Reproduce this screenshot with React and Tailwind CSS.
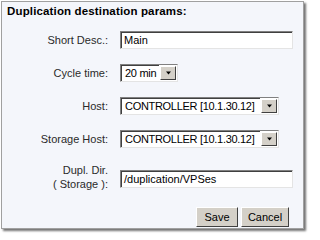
import React from "react";

const font = { fontFamily: '"Liberation Sans", Arial, sans-serif' };

function Arrow() {
  return (
    <div className="w-[16px] self-stretch m-[1px] bg-[#d4d0c8] border-t border-l border-t-white border-l-white border-r border-b border-r-[#404040] border-b-[#404040] flex items-center justify-center">
      <svg width="7" height="4" viewBox="0 0 7 4">
        <path d="M1 0.5h5L3.5 3.5z" fill="#000" />
      </svg>
    </div>
  );
}

function Select({ value, width }) {
  return (
    <div
      className={`flex h-[18px] bg-white border border-t-[#808080] border-l-[#808080] border-r-[#e4e4e4] border-b-[#e4e4e4] ${width}`}
    >
      <div className="flex-1 flex items-center pl-[3px] text-[11px] tracking-[-0.3px] text-black leading-none whitespace-nowrap overflow-hidden border-t border-l border-t-[#404040] border-l-[#404040]">
        {value}
      </div>
      <Arrow />
    </div>
  );
}

function Input({ value, cls = "" }) {
  return (
    <div className={`h-[18px] w-[173px] bg-white border border-t-[#808080] border-l-[#808080] border-r-[#e4e4e4] border-b-[#e4e4e4] ${cls}`}>
      <div className="h-full flex items-center pl-[2px] text-[11px] text-black leading-none border-t border-l border-t-[#404040] border-l-[#404040]">
        {value}
      </div>
    </div>
  );
}

function Label({ children }) {
  return (
    <div className="w-[106px] text-right text-[11px] leading-[14px] text-[#2a2a2a]">{children}</div>
  );
}

function Button({ children, w }) {
  return (
    <div
      className={`h-[20px] ${w} bg-[#d4d0c8] border border-t-white border-l-white border-r-[#404040] border-b-[#404040] flex items-center justify-center text-[11px] text-black`}
    >
      {children}
    </div>
  );
}

export default function App() {
  return (
    <div className="w-[309px] h-[234px] bg-white pl-[1px] pt-[1px]" style={font}>
      <div className="w-[303px] h-[228px] border border-[#a0a0a0] bg-[#f4f6fb] shadow-[2px_2px_2px_rgba(0,0,0,0.55)] flex flex-col">
        <div className="pl-[5px] pt-[3px] h-[19px] text-[11.5px] font-bold text-black leading-[13px] tracking-[0.15px]">
          Duplication destination params:
        </div>
        <div className="flex flex-col pt-[10px] gap-[15px]">
          <div className="flex items-center gap-[12px]">
            <Label>Short Desc.:</Label>
            <Input value="Main" />
          </div>
          <div className="flex items-center gap-[12px]">
            <Label>Cycle time:</Label>
            <Select value="20 min" width="w-[58px]" />
          </div>
          <div className="flex items-center gap-[12px]">
            <Label>Host:</Label>
            <Select value="CONTROLLER [10.1.30.12]" width="w-[159px]" />
          </div>
          <div className="flex items-center gap-[12px]">
            <Label>Storage Host:</Label>
            <Select value="CONTROLLER [10.1.30.12]" width="w-[159px]" />
          </div>
          <div className="flex items-start gap-[12px]">
            <Label>
              Dupl. Dir.
              <br />( Storage ):
            </Label>
            <Input value="/duplication/VPSes" cls="mt-[7px]" />
          </div>
        </div>
        <div className="flex justify-end gap-[3px] pr-[14px] mt-[16px]">
          <Button w="w-[42px]">Save</Button>
          <Button w="w-[48px]">Cancel</Button>
        </div>
      </div>
    </div>
  );
}
